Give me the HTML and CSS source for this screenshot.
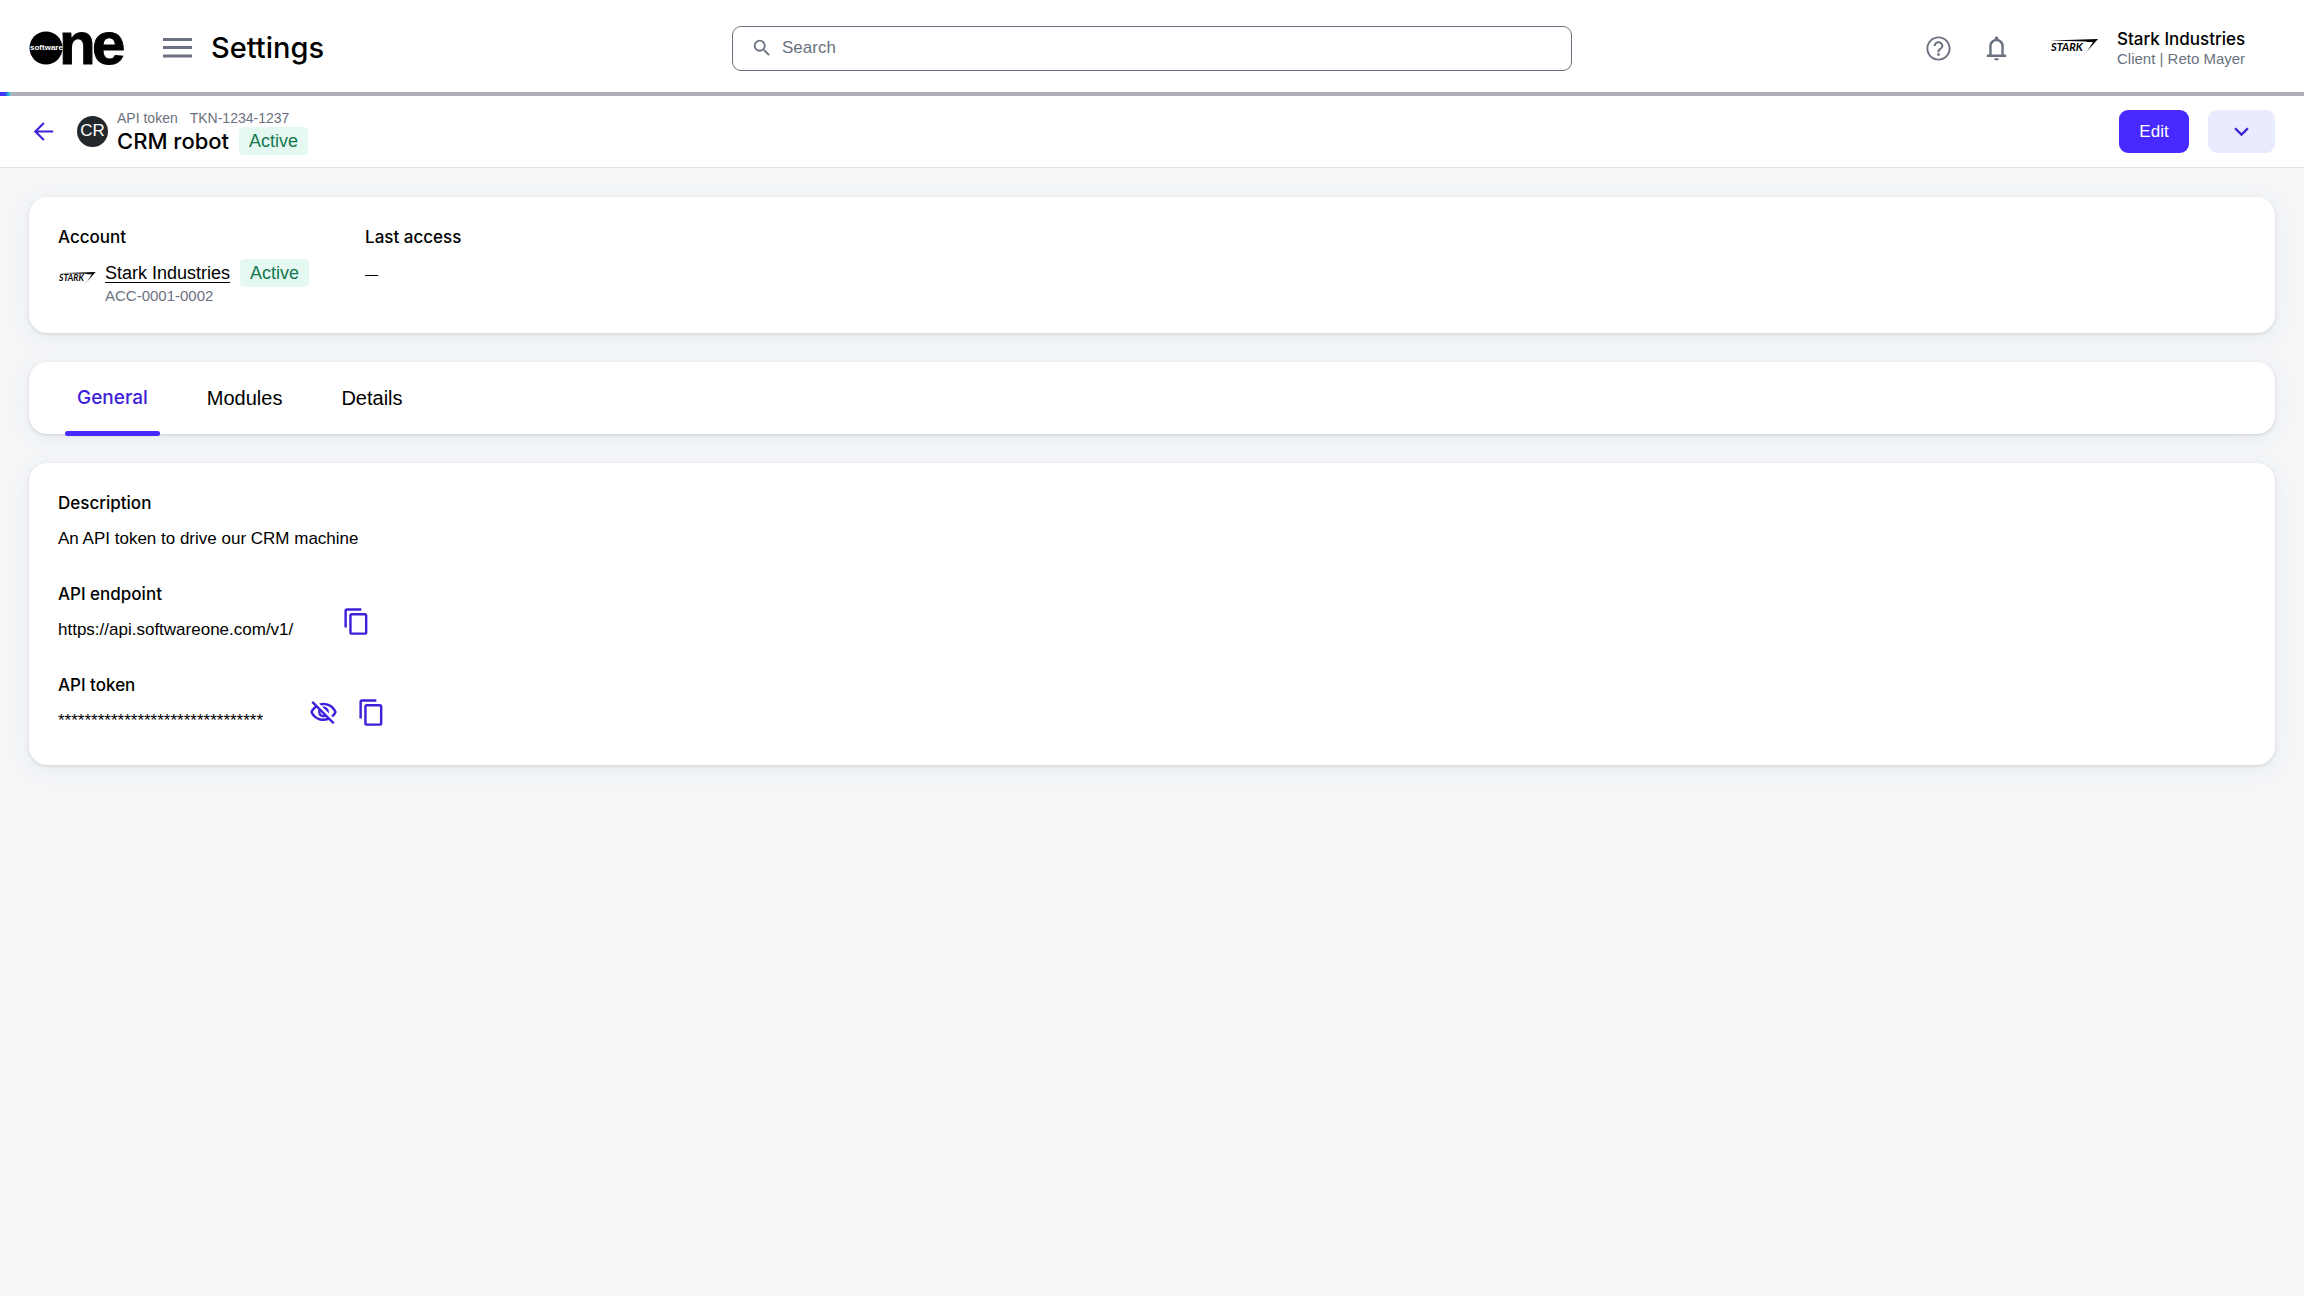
FILE: index.html
```
<!DOCTYPE html>
<html lang="en">
<head>
<meta charset="utf-8">
<meta name="viewport" content="width=device-width, initial-scale=1">
<title>CRM robot – Settings</title>
<link rel="stylesheet" href="styles.css">
</head>
<body>
<header class="topbar">
  <div class="brand">
    <a class="logo" href="#" aria-label="SoftwareOne">
      <svg width="98" height="36" viewBox="0 0 98 36">
        <circle cx="17" cy="18" r="16.500"/>
        <text class="logo-big" y="34"><tspan x="30">n</tspan><tspan x="63">e</tspan></text>
        <text class="logo-small" x="1" y="20">software</text>
      </svg>
    </a>
    <button class="icon-button menu" aria-label="Menu">
      <svg width="29" height="20" viewBox="0 0 29 20"><path d="M0 0h29v3H0zM0 8h29v3H0zM0 16.500h29v3H0z"/></svg>
    </button>
    <h1 class="app-title">Settings</h1>
  </div>
  <label class="search">
    <svg width="22" height="22" viewBox="0 0 24 24"><path d="M15.500 14h-.79l-.28-.27A6.470 6.470 0 0 0 16 9.500 6.500 6.500 0 1 0 9.500 16c1.610 0 3.090-.59 4.230-1.570l.27.28v.79l5 4.990L20.490 19l-4.990-5zm-6 0C7.010 14 5 11.990 5 9.500S7.010 5 9.500 5 14 7.010 14 9.500 11.990 14 9.500 14z"/></svg>
    <input type="search" placeholder="Search" aria-label="Search">
  </label>
  <div class="tools">
    <button class="icon-button" aria-label="Help">
      <svg width="29" height="29" viewBox="0 0 24 24"><path d="M11 18h2v-2h-2v2zm1-16C6.480 2 2 6.480 2 12s4.480 10 10 10 10-4.480 10-10S17.520 2 12 2zm0 18.400c-4.600 0-8.400-3.800-8.400-8.400S7.400 3.600 12 3.600s8.400 3.800 8.400 8.400-3.800 8.400-8.400 8.400zM12 6c-2.210 0-4 1.790-4 4h1.700c0-1.300 1-2.300 2.300-2.300s2.300 1 2.300 2.300c0 2-3.200 1.900-3.200 5h1.700c0-2.250 3.200-2.500 3.200-5 0-2.210-1.790-4-4-4z"/></svg>
    </button>
    <button class="icon-button" aria-label="Notifications">
      <svg width="29" height="29" viewBox="0 0 24 24"><path d="M4 19v-2h2v-7c0-1.380.42-2.610 1.250-3.690A5.900 5.900 0 0 1 10.500 4.200v-.7c0-.83.67-1.500 1.500-1.500s1.500.67 1.500 1.500v.7c1.330.33 2.420 1.040 3.250 2.110A5.900 5.900 0 0 1 18 10v7h2v2H4zm8 3a2 2 0 0 1-2-2h4a2 2 0 0 1-2 2zm-4-5h8v-7a4 4 0 0 0-8 0v7z"/></svg>
    </button>
    <div class="user">
      <svg width="48" height="18" viewBox="0 0 48 18" aria-hidden="true">
        <path d="M0 1.500 48 0 32 18 38 11 43 3 37 3 36 2.400Z"/>
        <text class="stark-text" x="1" y="12">STARK</text>
      </svg>
      <div class="user-text">
        <span class="strong">Stark Industries</span>
        <span class="small">Client | Reto Mayer</span>
      </div>
    </div>
  </div>
</header>
<div class="loading"></div>
<div class="subbar">
  <a class="back" href="#" aria-label="Back">
    <svg width="29" height="29" viewBox="0 0 24 24"><path d="M20 11.200H7.300l5.600-5.700L11.700 4.300 4 12l7.700 7.700 1.200-1.200-5.600-5.700H20z"/></svg>
  </a>
  <span class="avatar">CR</span>
  <div class="heading">
    <div class="crumb"><span>API token</span><span>TKN-1234-1237</span></div>
    <div class="row"><h2 class="name">CRM robot</h2><span class="badge">Active</span></div>
  </div>
  <div class="actions">
    <button class="button primary">Edit</button>
    <button class="button secondary" aria-label="More actions">
      <svg width="29" height="29" viewBox="0 0 24 24"><path d="M7.400 8.600 12 13.200l4.600-4.600L18 10l-6 6-6-6z"/></svg>
    </button>
  </div>
</div>
<main class="content">
  <section class="card summary">
    <div>
      <h3 class="strong">Account</h3>
      <div class="account">
        <svg class="account-logo" width="38" height="14" viewBox="0 0 48 18" aria-hidden="true">
          <path d="M0 1.500 48 0 32 18 38 11 43 3 37 3 36 2.400Z"/>
          <text class="stark-text" x="1" y="12">STARK</text>
        </svg>
        <div>
          <div class="row"><a class="link" href="#">Stark Industries</a><span class="badge">Active</span></div>
          <div class="small">ACC-0001-0002</div>
        </div>
      </div>
    </div>
    <div>
      <h3 class="strong">Last access</h3>
      <div class="dash">—</div>
    </div>
  </section>
  <nav class="card tabs">
    <a class="tab active" href="#">General</a>
    <a class="tab" href="#">Modules</a>
    <a class="tab" href="#">Details</a>
  </nav>
  <section class="card details">
    <div class="field">
      <h3 class="strong">Description</h3>
      <div class="value">An API token to drive our CRM machine</div>
    </div>
    <div class="field">
      <h3 class="strong">API endpoint</h3>
      <div class="value endpoint">https://api.softwareone.com/v1/</div>
      <div class="field-actions">
        <button class="icon-button accent" aria-label="Copy endpoint">
          <svg width="29" height="29" viewBox="0 0 24 24"><path d="M16 1H4c-1.100 0-2 .9-2 2v14h2V3h12V1zm3 4H8c-1.100 0-2 .9-2 2v14c0 1.100.9 2 2 2h11c1.100 0 2-.9 2-2V7c0-1.100-.9-2-2-2zm0 16H8V7h11v14z"/></svg>
        </button>
      </div>
    </div>
    <div class="field">
      <h3 class="strong">API token</h3>
      <div class="value token">*******************************</div>
      <div class="field-actions">
        <button class="icon-button accent" aria-label="Show token">
          <svg width="29" height="29" viewBox="0 0 24 24"><path d="M12 6c3.790 0 7.170 2.130 8.820 5.500-.59 1.220-1.420 2.270-2.410 3.120l1.410 1.410c1.390-1.230 2.490-2.770 3.180-4.530C21.270 7.110 17 4 12 4c-1.270 0-2.490.2-3.640.57l1.650 1.650C10.660 6.090 11.320 6 12 6zm-1.070 1.140L13 9.210c.57.25 1.030.71 1.280 1.280l2.070 2.070c.08-.34.14-.7.14-1.070C16.500 9.010 14.480 7 12 7c-.37 0-.72.05-1.070.14zM2.010 3.870l2.680 2.680A11.740 11.740 0 0 0 1 11.500C2.730 15.890 7 19 12 19c1.520 0 2.980-.29 4.320-.82l3.420 3.420 1.410-1.410L3.420 2.450 2.010 3.870zm7.500 7.500 2.610 2.610c-.04.01-.08.02-.12.02a2.500 2.500 0 0 1-2.500-2.500c0-.05.01-.08.01-.13zm-3.400-3.400 1.750 1.750a4.600 4.600 0 0 0-.36 1.780 4.507 4.507 0 0 0 6.270 4.140l.98.98c-.88.24-1.800.38-2.750.38a9.770 9.770 0 0 1-8.820-5.500c.7-1.430 1.720-2.610 2.930-3.530z"/></svg>
        </button>
        <button class="icon-button accent" aria-label="Copy token">
          <svg width="29" height="29" viewBox="0 0 24 24"><path d="M16 1H4c-1.100 0-2 .9-2 2v14h2V3h12V1zm3 4H8c-1.100 0-2 .9-2 2v14c0 1.100.9 2 2 2h11c1.100 0 2-.9 2-2V7c0-1.100-.9-2-2-2zm0 16H8V7h11v14z"/></svg>
        </button>
      </div>
    </div>
  </section>
</main>
</body>
</html>
```
FILE: styles.css
```
:root {
  --grey: #6b7180;
  --accent: #472aff;
  --medium: Inter, "Liberation Sans", sans-serif;
}
* { box-sizing: border-box; }
body {
  margin: 0;
  min-height: 100vh;
  background: #f4f6f8;
  color: #000;
  font: 17px/22px "Liberation Sans", Arial, sans-serif;
}
h1, h2, h3 { margin: 0; }
svg { display: block; fill: currentColor; flex: none; overflow: visible; }
a { color: inherit; text-decoration: none; }
button { border: 0; padding: 0; font: inherit; cursor: pointer; }
.stark-text { font: italic 700 11px Lato, sans-serif; }
.logo-big { font: bold 60px "Liberation Sans", sans-serif; stroke: #000; stroke-width: 1px; }
.logo-small { font: bold 8px "Liberation Sans", sans-serif; fill: #fff; }
.icon-button { background: none; color: var(--grey); }
.icon-button.accent { color: #3d20d9; }
.strong { font: 500 17px/22px var(--medium); }
.small { font-size: 15px; line-height: 18px; color: var(--grey); }
.row { display: flex; align-items: center; gap: 10px; }

.topbar {
  display: grid;
  grid-template-columns: 1fr minmax(240px, 840px) 1fr;
  align-items: center;
  min-height: 92px;
  padding: 4px 29px 0;
  background: #fff;
}
.brand { display: flex; align-items: center; }
.menu { margin: 0 19px 0 36px; }
.app-title { font: 500 29px/36px var(--medium); }
.search {
  display: flex;
  align-items: center;
  gap: 9px;
  height: 45px;
  padding: 0 18px;
  border: 1px solid var(--grey);
  border-radius: 9px;
  color: var(--grey);
}
.search input {
  flex: 1;
  min-width: 0;
  padding: 0;
  border: 0;
  outline: 0;
  background: none;
  font: inherit;
}
.search input::placeholder { color: var(--grey); opacity: 1; }
.tools { display: flex; justify-content: flex-end; align-items: center; gap: 29px; }
.user { display: flex; align-items: center; gap: 19px; margin-left: 10px; }
.user-text { display: flex; flex-direction: column; min-width: 158px; }

.loading {
  height: 4px;
  background: linear-gradient(90deg, #472aff 0, #3b3ff0 5px, #25c5d8 9px, #aeb0ba 11px);
}
.subbar {
  display: flex;
  align-items: center;
  min-height: 72px;
  padding: 0 29px;
  border-bottom: 1px solid #dfe2e8;
  background: #fff;
}
.back { color: #3d20d9; margin-right: 19px; }
.avatar {
  width: 31px;
  height: 31px;
  border-radius: 50%;
  background: #23282d;
  color: #fff;
  line-height: 30px;
  text-align: center;
  margin-right: 9px;
}
.crumb { display: flex; gap: 12px; font-size: 14px; line-height: 18px; color: var(--grey); }
.name { font: 500 22px/28px var(--medium); }
.badge {
  padding: 0 10px;
  border-radius: 4px;
  background: #e6f8f2;
  color: #13774f;
  font-size: 18px;
  line-height: 28px;
}
.actions { display: flex; gap: 19px; margin-left: auto; }
.button { display: grid; place-items: center; height: 43px; border-radius: 9px; font-size: 17px; }
.primary { width: 70px; background: var(--accent); color: #fff; }
.secondary { width: 67px; background: #e9ebff; color: #3d20d9; }

.content { display: grid; gap: 29px; padding: 29px; }
.card {
  border-radius: 18px;
  background: #fff;
  box-shadow: 0 1px 3px rgba(107, 113, 128, .25), 0 4px 20px rgba(107, 113, 128, .08);
}
.summary { display: flex; gap: 56px; padding: 29px 29px 28px; }
.account { display: flex; gap: 9px; margin-top: 11px; }
.account-logo { margin-top: 13px; }
.link { font-size: 18px; text-decoration: underline; text-underline-offset: 3px; }
.dash { margin-top: 16px; font: 13px/22px var(--medium); }
.tabs { display: flex; gap: 35px; padding: 0 36px; }
.tab { position: relative; padding: 0 12px; font-size: 20px; line-height: 72px; }
.tab.active { font-family: var(--medium); font-size: 19px; font-weight: 500; color: #3d20d9; }
.tab.active::after {
  content: "";
  position: absolute;
  inset: auto 0 -2px;
  height: 5px;
  border-radius: 3px;
  background: var(--accent);
}
.details { display: grid; gap: 33px; padding: 29px 29px 33px; }
.field { display: grid; grid-template-columns: auto 1fr; gap: 14px 40px; }
.field .value { grid-column: 1; }
.endpoint { min-width: 244px; }
.token { min-width: 211px; }
.field-actions { display: flex; gap: 19px; grid-area: 1 / 2 / 3; align-self: end; margin-bottom: 5px; }
```
